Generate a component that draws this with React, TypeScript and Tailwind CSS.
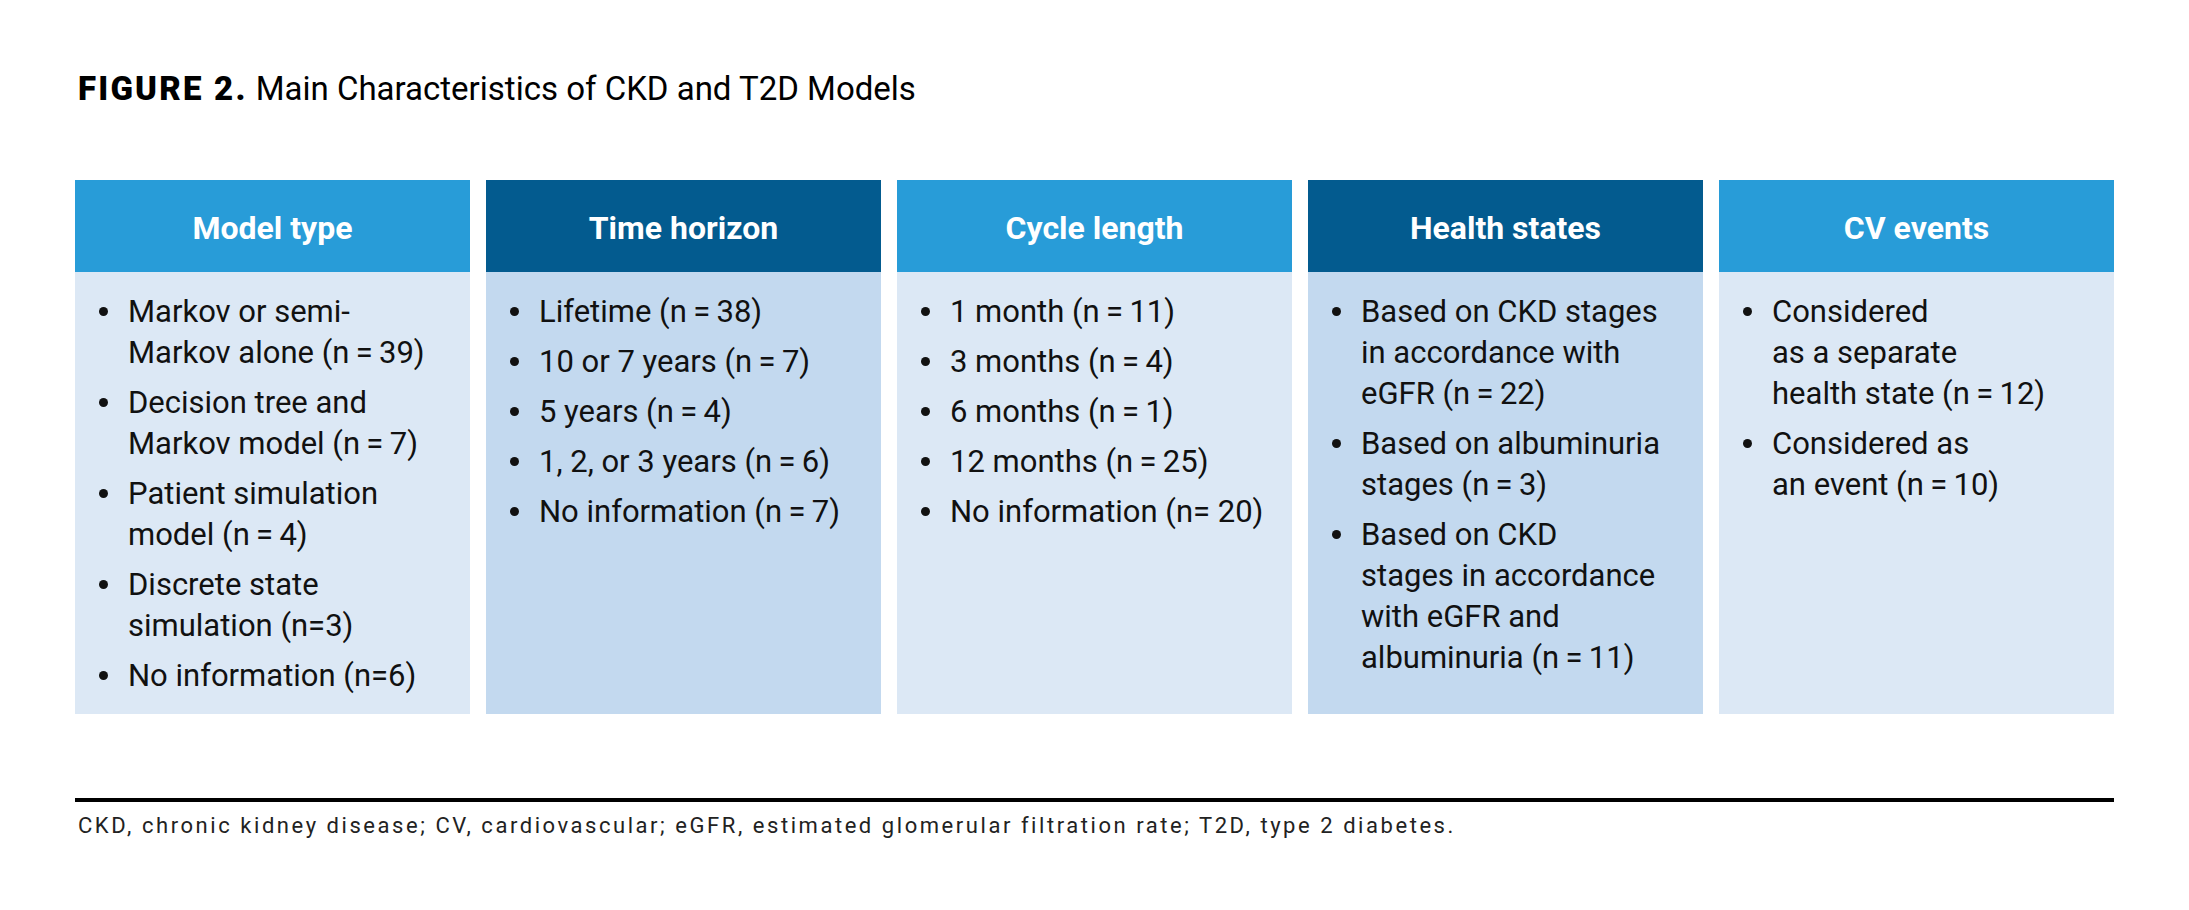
import React from 'react';

type Column = {
  title: string;
  dark: boolean;
  items: string[][];
};

const t = '\u2009';

const columns: Column[] = [
  {
    title: 'Model type',
    dark: false,
    items: [
      ['Markov or semi-', `Markov alone (n${t}=${t}39)`],
      ['Decision tree and', `Markov model (n${t}=${t}7)`],
      ['Patient simulation', `model (n${t}=${t}4)`],
      ['Discrete state', 'simulation (n=3)'],
      ['No information (n=6)'],
    ],
  },
  {
    title: 'Time horizon',
    dark: true,
    items: [
      [`Lifetime (n${t}=${t}38)`],
      [`10 or 7 years (n${t}=${t}7)`],
      [`5 years (n${t}=${t}4)`],
      [`1, 2, or 3 years (n${t}=${t}6)`],
      [`No information (n${t}=${t}7)`],
    ],
  },
  {
    title: 'Cycle length',
    dark: false,
    items: [
      [`1 month (n${t}=${t}11)`],
      [`3 months (n${t}=${t}4)`],
      [`6 months (n${t}=${t}1)`],
      [`12 months (n${t}=${t}25)`],
      ['No information (n= 20)'],
    ],
  },
  {
    title: 'Health states',
    dark: true,
    items: [
      ['Based on CKD stages', 'in accordance with', `eGFR (n${t}=${t}22)`],
      ['Based on albuminuria', `stages (n${t}=${t}3)`],
      ['Based on CKD', 'stages in accordance', 'with eGFR and', `albuminuria (n${t}=${t}11)`],
    ],
  },
  {
    title: 'CV events',
    dark: false,
    items: [
      ['Considered', 'as a separate', `health state (n${t}=${t}12)`],
      ['Considered as', `an event (n${t}=${t}10)`],
    ],
  },
];

const ColumnCard: React.FC<{ col: Column }> = ({ col }) => (
  <div className={col.dark ? 'flex flex-col bg-[#c3d9ef]' : 'flex flex-col bg-[#dce8f5]'}>
    <div
      className={
        col.dark
          ? 'h-[92px] flex items-center justify-center pt-[3px] bg-[#035b8f] text-white font-bold text-[32px]'
          : 'h-[92px] flex items-center justify-center pt-[3px] bg-[#289cd8] text-white font-bold text-[32px]'
      }
    >
      {col.title}
    </div>
    <ul className="pt-[19px] pl-[24px] pr-2 flex flex-col gap-[9px] text-[31px] leading-[41px] text-[#111]">
      {col.items.map((lines, i) => (
        <li key={i} className="flex">
          <span className="w-[29px] shrink-0 h-[41px] flex items-center">
            <span className="block w-[9px] h-[9px] rounded-full bg-[#111]" />
          </span>
          <span>
            {lines.map((line, j) => (
              <span key={j} className="block whitespace-nowrap">
                {line}
              </span>
            ))}
          </span>
        </li>
      ))}
    </ul>
  </div>
);

export default function App() {
  return (
    <div className="w-[2189px] h-[910px] bg-white px-[75px] pt-[69px] font-['Roboto',sans-serif]">
      <h1 className="pl-[3px] text-[33px] leading-[40px] text-black">
        <span className="font-black tracking-[2.2px]">FIGURE 2.</span>{' '}
        <span className="font-normal">Main Characteristics of CKD and T2D Models</span>
      </h1>

      <div className="mt-[71px] grid grid-cols-5 gap-4 h-[534px]">
        {columns.map((col) => (
          <ColumnCard key={col.title} col={col} />
        ))}
      </div>

      <div className="mt-[84px] h-[4px] bg-black" />
      <p className="mt-[10px] pl-[3px] text-[22px] leading-[28px] tracking-[2.55px] text-[#222]">
        CKD, chronic kidney disease; CV, cardiovascular; eGFR, estimated glomerular filtration rate; T2D, type 2 diabetes.
      </p>
    </div>
  );
}
